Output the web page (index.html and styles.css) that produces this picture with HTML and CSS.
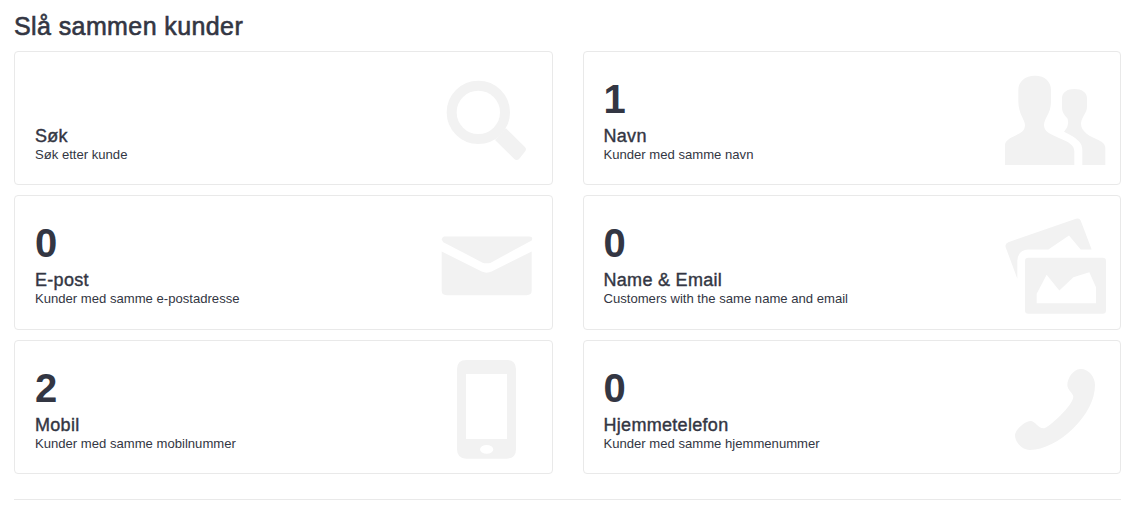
FILE: index.html
```html
<!DOCTYPE html>
<html lang="en">
  <head>
    <meta charset="utf-8" />
    <meta name="viewport" content="width=device-width, initial-scale=1.0" />
    <title>Slå sammen kunder</title>
    <link rel="stylesheet" href="styles.css">
  </head>
  <body>
    <main>
      <h1>Slå sammen kunder</h1>
      <div class="cards">
        <a class="card">
          <div class="card-text">
            <div class="count"></div>
            <h2>Søk</h2>
            <p>Søk etter kunde</p>
          </div>
          <svg class="icon" viewBox="27 9 330 330">
            <circle class="ring" cx="175" cy="157" r="80" />
            <path d="M258 205 L314 260 Q322 268 314 276 L298 296 Q290 304 282 296 L225 240 Z" />
          </svg>
        </a>
        <a class="card">
          <div class="card-text">
            <div class="count">1</div>
            <h2>Navn</h2>
            <p>Kunder med samme navn</p>
          </div>
          <svg class="icon" viewBox="21 9 330 330">
            <path d="M45 315 V255 Q45 245 60 235 C80 222 105 220 105 195 C105 180 85 160 85 125 V90 C85 65 105 47 135 47 C165 47 183 65 183 90 V125 C183 160 162 175 162 195 C162 215 180 222 205 233 C240 248 253 255 253 275 V315 Z" />
            <path d="M277 315 V270 C277 250 265 235 222 215 C232 205 238 190 232 175 C225 165 216 160 216 140 V115 C216 97 232 87 253 87 C275 87 291 97 291 115 V140 C291 158 275 170 273 190 C272 215 300 230 325 240 C340 247 346 255 346 265 V315 Z" />
          </svg>
        </a>
        <a class="card">
          <div class="card-text">
            <div class="count">0</div>
            <h2>E-post</h2>
            <p>Kunder med samme e-postadresse</p>
          </div>
          <svg class="icon" viewBox="27 -7.5 330 330">
            <path d="M72 78 H328 Q340 78 335 90 L215 155 Q200 162 185 155 L70 95 Q60 85 72 78 Z" />
            <path d="M65 123 L185 183 Q200 190 215 183 L335 123 V240 Q335 254 320 254 H80 Q65 254 65 240 Z" />
          </svg>
        </a>
        <a class="card">
          <div class="card-text">
            <div class="count">0</div>
            <h2>Name &amp; Email</h2>
            <p>Customers with the same name and email</p>
          </div>
          <svg class="icon" viewBox="21 7.5 330 330">
            <path d="M47 125 Q44 115 55 110 L258 40 Q268 36 272 45 L305 132 H272 L237 90 L175 132 H115 Q85 132 82 165 V220 Z" />
            <path fill-rule="evenodd" d="M115 157 H338 Q348 157 348 167 V315 Q348 325 338 325 H115 Q105 325 105 315 V167 Q105 157 115 157 Z M140 293 V265 L170 208 L208 255 L250 215 L298 200 L318 245 V293 Z" />
          </svg>
        </a>
        <a class="card">
          <div class="card-text">
            <div class="count">2</div>
            <h2>Mobil</h2>
            <p>Kunder med samme mobilnummer</p>
          </div>
          <svg class="icon" viewBox="-3 6 330 330">
            <path fill-rule="evenodd" d="M109 30 H230 Q258 30 258 58 V298 Q258 326 230 326 H109 Q81 326 81 298 V58 Q81 30 109 30 Z M108 72 V267 H231 V72 Z M150 298 A20 13 0 0 0 190 298 A20 13 0 0 0 150 298 Z" />
          </svg>
        </a>
        <a class="card">
          <div class="card-text">
            <div class="count">0</div>
            <h2>Hjemmetelefon</h2>
            <p>Kunder med samme hjemmenummer</p>
          </div>
          <svg class="icon" viewBox="21 6 330 330">
            <path d="M270 57 C295 55 315 80 315 105 C315 150 290 195 250 235 C210 275 160 300 120 300 C100 300 75 280 75 255 C75 240 105 213 122 213 C135 213 145 235 160 235 C175 235 250 165 250 140 C250 130 232 120 232 105 C232 85 250 58 270 57 Z" />
          </svg>
        </a>
      </div>
      <hr>
    </main>
  </body>
</html>
```

FILE: styles.css
```css
:root {
  --ink: #333643;
  --line: #e9e9e9;
  --ghost: #f2f2f2;
}

body {
  margin: 0;
  padding: 0 15px 0 14px;
  font-family: "Liberation Sans", Arial, sans-serif;
  color: var(--ink);
  background-color: #fff;
}

h1 {
  margin: 0;
  padding-top: 11px;
  height: 40px;
  font-size: 25px;
  line-height: 30px;
  font-weight: 400;
  letter-spacing: 0.4px;
  -webkit-text-stroke: 0.6px var(--ink);
}

.cards {
  display: grid;
  grid-template-columns: 1fr 1fr;
  grid-auto-rows: 134.2px;
  column-gap: 30px;
  row-gap: 10.3px;
}

.card {
  display: flex;
  align-items: center;
  justify-content: space-between;
  padding: 0 13px 0 20px;
  border: 1px solid var(--line);
  border-radius: 4px;
  box-sizing: border-box;
}

.card-text {
  align-self: flex-end;
  padding-bottom: 21.6px;
}

.count {
  height: 48px;
  font-size: 40px;
  line-height: 44px;
  font-weight: 700;
}

h2 {
  margin: 0;
  font-size: 18px;
  line-height: 22px;
  font-weight: 400;
  letter-spacing: 0.3px;
  -webkit-text-stroke: 0.4px var(--ink);
}

p {
  margin: 0;
  font-size: 13.1px;
  line-height: 16px;
}

.icon {
  width: 110px;
  height: 110px;
  fill: var(--ghost);
}

.ring {
  fill: none;
  stroke: var(--ghost);
  stroke-width: 30;
}

hr {
  margin: 25px 0 0;
  border: 0;
  border-top: 1px solid var(--line);
}
```
